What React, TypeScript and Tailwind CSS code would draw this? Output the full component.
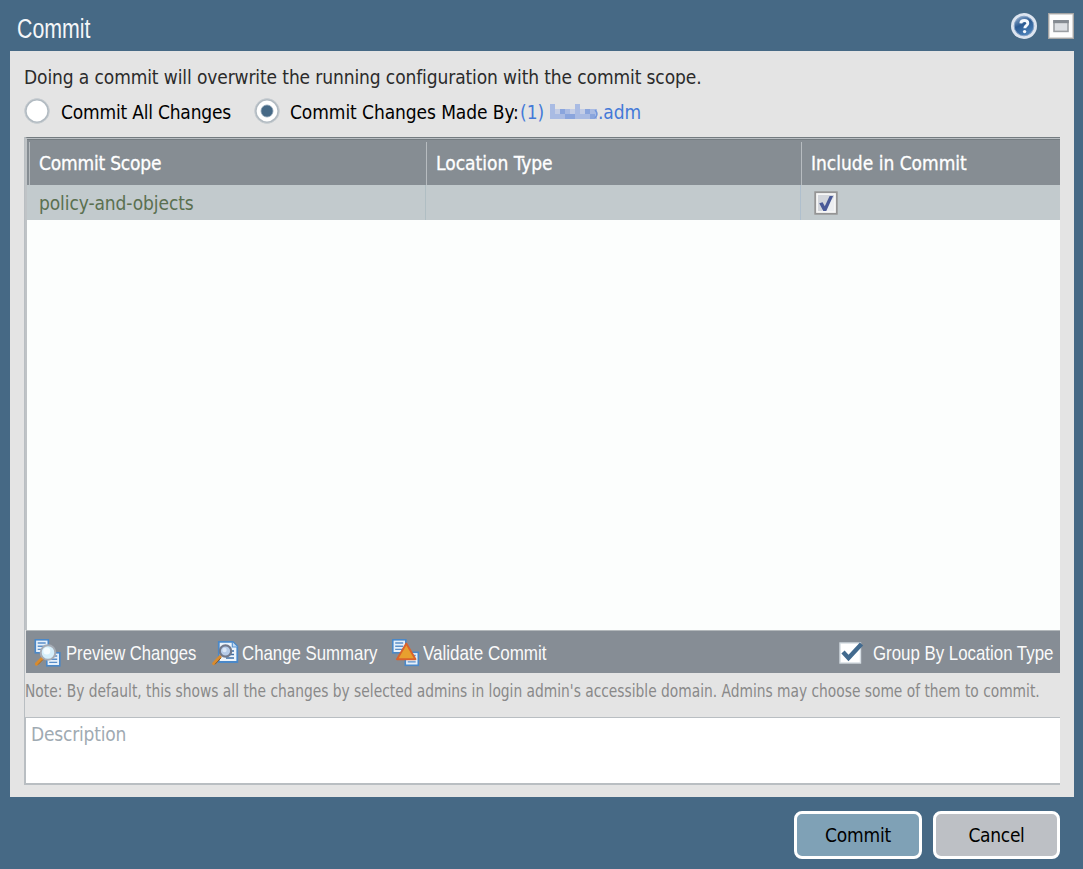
import React from "react";

const sans = "font-['DejaVu_Sans_Condensed','DejaVu_Sans',sans-serif] [font-stretch:condensed]";
const narrow = "font-['Liberation_Sans',sans-serif]";

function HelpIcon() {
  return (
    <svg width="26" height="26" viewBox="0 0 26 26">
      <defs>
        <linearGradient id="help" x1="0" y1="0" x2="0.5" y2="1">
          <stop offset="0" stopColor="#9db6d3" />
          <stop offset="0.5" stopColor="#2b5a92" />
          <stop offset="1" stopColor="#4a80b8" />
        </linearGradient>
      </defs>
      <circle cx="13" cy="13" r="13" fill="#dde5f0" />
      <circle cx="13" cy="13" r="9.8" fill="url(#help)" stroke="#86a3c6" strokeWidth="1" />
      <path d="M9.800 10.400c.2-2.200 1.700-2.900 3.500-2.900 2.100 0 3.500 1.100 3.500 2.700 0 2.500-3 2.500-3 5.100" fill="none" stroke="#f4f8fd" strokeWidth="2.900" />
      <circle cx="13.600" cy="18.600" r="1.700" fill="#f4f8fd" />
    </svg>
  );
}

function WindowIcon() {
  return (
    <svg width="26" height="26" viewBox="0 0 26 26">
      <rect x="0.5" y="0.5" width="25" height="25" fill="#fdfdfd" stroke="#a3a3a3" />
      <rect x="1.3" y="1.3" width="23.4" height="23.4" fill="none" stroke="#c5c5c3" strokeWidth="0.7" />
      <rect x="6" y="8" width="14" height="10.4" fill="#dcdfe3" stroke="#9b9fa3" strokeWidth="1.6" />
      <rect x="5.2" y="7" width="15.6" height="3.2" fill="#858b92" />
    </svg>
  );
}

function Radio({ checked = false }: { checked?: boolean }) {
  return (
    <svg width="26" height="26" viewBox="0 0 26 26">
      <circle cx="13" cy="13" r="11.4" fill="#fff" stroke="#b1bac1" strokeWidth="2" />
      <circle cx="13" cy="13" r="12.3" fill="none" stroke="#c9ced2" strokeWidth="0.8" />
      {checked && <circle cx="13" cy="13" r="6" fill="#466986" stroke="#8ba1b4" strokeWidth="0.8" />}
    </svg>
  );
}

function Sheet({ x, y }: { x: number; y: number }) {
  return (
    <g transform={`translate(${x} ${y})`}>
      <rect x="0.8" y="0.8" width="13" height="13" fill="#e6f0fa" stroke="#4a88c8" strokeWidth="1.6" />
      <path d="M3.2 4h8M3.2 7.2h8M3.2 10.4h8" stroke="#5b8fc9" strokeWidth="1.4" />
    </g>
  );
}

function PreviewIcon() {
  return (
    <svg className="shrink-0" width="28" height="28" viewBox="0 0 28 28">
      <Sheet x={0.5} y={0} />
      <Sheet x={12} y={13} />
      <path d="M8 19.500L2.500 25" stroke="#d98b2e" strokeWidth="3.200" strokeLinecap="round" />
      <path d="M8.500 21L4 25.600" stroke="#9b6c35" strokeWidth="1" />
      <circle cx="14" cy="13.500" r="7.300" fill="#d5effb" stroke="#a6acb5" strokeWidth="2" />
      <circle cx="12.800" cy="12" r="3.500" fill="#f4fcff" />
    </svg>
  );
}

function SummaryIcon() {
  return (
    <svg className="shrink-0" width="28" height="28" viewBox="0 0 28 28">
      <path d="M6.800 2.800h14l4.500 4.500v15.700h-18.500z" fill="#eef5fc" stroke="#4a88c8" strokeWidth="1.800" />
      <path d="M20.300 3v5h5" fill="#c3daf2" stroke="#5b94cf" strokeWidth="1.200" />
      <path d="M17 12h5M17 15.500h5M14 19h8" stroke="#3d6fa8" strokeWidth="1.500" />
      <path d="M8 17.800L1.800 24.500" stroke="#d98b2e" strokeWidth="3.200" strokeLinecap="round" />
      <path d="M9 18.800L3 25.300" stroke="#855a2c" strokeWidth="1" />
      <circle cx="13.500" cy="12" r="5.700" fill="#b6cbe8" stroke="#71798c" strokeWidth="2.200" />
      <circle cx="12.500" cy="11" r="2.200" fill="#dce8f8" />
    </svg>
  );
}

function ValidateIcon() {
  return (
    <svg className="shrink-0" width="28" height="28" viewBox="0 0 28 28">
      <Sheet x={0} y={0} />
      <Sheet x={12.5} y={12.5} />
      <path d="M14.300 4.500L23.500 20.200H5z" fill="#e8a02e" stroke="#d9622c" strokeWidth="1.900" strokeLinejoin="round" />
    </svg>
  );
}

function RowCheck() {
  return (
    <svg width="24" height="24" viewBox="0 0 24 24">
      <rect x="1.200" y="1.200" width="21.600" height="21.600" fill="#f6f6f6" stroke="#959595" strokeWidth="1.800" />
      <rect x="4" y="4" width="16" height="16" fill="#d3d6dc" />
      <path d="M8 20h12V6z" fill="#eceef1" />
      <path d="M5.200 12.300l3.400-1 2.200 4L15.600 5h3.500L12.300 20H9.300z" fill="#4a5a98" />
    </svg>
  );
}

function GroupCheck() {
  return (
    <svg width="26" height="24" viewBox="0 0 26 24">
      <rect x="2" y="2" width="20.500" height="20" fill="#fff" stroke="#d4dce2" strokeWidth="1.400" />
      <path d="M5 11l5.500 6L23.500 3" fill="none" stroke="#426a8e" strokeWidth="4.400" />
    </svg>
  );
}

export default function App() {
  return (
    <div className={`${sans} flex h-[869px] w-[1083px] flex-col overflow-hidden whitespace-nowrap bg-[#466985] text-[19px] text-black [font-variant-ligatures:none]`}>
      <header className="flex h-[51px] shrink-0 items-center pl-[17px] pr-[9px]">
        <h1 className={`${narrow} origin-left scale-x-[0.79] pt-[7px] text-[27px] leading-[30px] text-[#f4f6f8]`}>Commit</h1>
        <div className="ml-auto flex gap-[11px]">
          <HelpIcon />
          <WindowIcon />
        </div>
      </header>

      <main className="ml-[10px] mr-[9px] flex h-[746px] shrink-0 flex-col bg-[#e4e4e4] pl-[14px] pr-[14px]">
        <p className="mt-[14px] h-6 leading-6 tracking-[-0.11px] text-[#2b2b2b]">
          Doing a commit will overwrite the running configuration with the commit scope.
        </p>
        <div className="flex h-[48px] items-center pb-[4px]">
          <Radio />
          <span className="ml-[11px] w-[193px] pt-[2px] tracking-[-0.2px]">Commit All Changes</span>
          <Radio checked />
          <span className="ml-[10px] w-[230px] pt-[2px] tracking-[-0.08px]">Commit Changes Made By:</span>
          <span className="flex items-center pt-[2px] text-[#4379d8]">
            <span className="w-[25px]">(1)</span>
            <svg className="ml-[5px]" width="48" height="16" viewBox="0 0 48 16">
              <path d="M0 0h5v15H0zM25 0h5v15h-5z" fill="#a9bbe3" />
              <path d="M5 5h20v10H5zM30 5h17v10H30z" fill="#a9bbe3" />
              <path d="M5 5h5v5H5zM20 5h5v5h-5zM30 5h5v5h-5z" fill="#c3cde6" />
              <path d="M10 5h5v5h-5zM15 10h10v5H15zM35 5h5v5h-5zM40 10h5v5h-5z" fill="#8aa5dd" />
              <path d="M45 6q4 4 0 8" fill="none" stroke="#7397dc" strokeWidth="1.500" />
            </svg>
            <span className="tracking-[-0.1px]">.adm</span>
          </span>
        </div>

        <section className="flex h-[536px] shrink-0 flex-col border-l border-[#b9bec2]">
          <div className="flex h-[493px] flex-col border-l-2 border-t border-l-[#bfc3c6] border-t-[#737b80] bg-[#fcfefd]">
            <div className="h-px shrink-0 bg-[#b9bec2]" />
            <div className="flex h-[46px] shrink-0 border-t border-[#737b80] bg-[#868d93] text-white [-webkit-text-stroke:0.3px_white]">
              <div className="ml-[2px] mt-[2px] w-[397px] border-l border-[#b7bcc0] pl-[9px] leading-[43px] tracking-[-0.2px]">Commit Scope</div>
              <div className="mt-[2px] w-[375px] border-l border-[#b7bcc0] pl-[9px] leading-[43px]">Location Type</div>
              <div className="mt-[2px] flex-1 border-l border-[#b7bcc0] pl-[9px] leading-[43px]">Include in Commit</div>
            </div>
            <div className="flex h-[35px] shrink-0 items-center bg-[#c2cacd]">
              <div className="w-[398px] pl-[12px] pt-[2px] tracking-[-0.1px] text-[#5a7050]">policy-and-objects</div>
              <div className="h-full w-[375px] border-l border-[#b0bec3]" />
              <div className="flex h-full flex-1 items-center border-l border-[#afbfcd] pl-[13px] pt-[1px]">
                <RowCheck />
              </div>
            </div>
          </div>
          <div className={`${narrow} ml-px flex h-[43px] shrink-0 items-center border-t border-[#b3b8bb] bg-[#868d95] pl-[8px] pr-[7px] pt-[2px] text-[21px] text-[#fafafa]`}>
            <PreviewIcon />
            <span className="ml-[4px] w-[146px]"><span className="inline-block origin-left scale-x-[0.792]">Preview Changes</span></span>
            <SummaryIcon />
            <span className="ml-[2px] w-[150px]"><span className="inline-block origin-left scale-x-[0.8]">Change Summary</span></span>
            <ValidateIcon />
            <span className="ml-[3px] w-[130px]"><span className="inline-block origin-left scale-x-[0.81]">Validate Commit</span></span>
            <span className="ml-auto mr-[9px]"><GroupCheck /></span>
            <span className="w-[180px]"><span className="inline-block origin-left scale-x-[0.802]">Group By Location Type</span></span>
          </div>
        </section>
        <div className="h-[44px] shrink-0 border-l border-[#b9bec2] pt-[6px] text-[17px] leading-6 text-[#898989]">
          <span className="inline-block origin-left scale-x-[0.9025]">
            Note: By default, this shows all the changes by selected admins in login admin's accessible domain. Admins may choose some of them to commit.
          </span>
        </div>
        <div className="h-[68px] shrink-0 border-b-2 border-l-2 border-t border-[#b9bec2] bg-white pl-[5px] pt-[4px] leading-6 tracking-[-0.2px] text-[#9faab2]">
          Description
        </div>
      </main>

      <footer className="flex flex-1 justify-end gap-[11px] pr-[23px] pt-[14px]">
        <button className="h-[48px] w-[128px] rounded-[8px] border-[3px] border-white bg-[#7fa1b6] tracking-[-0.15px]">Commit</button>
        <button className="h-[48px] w-[127px] rounded-[8px] border-[3px] border-white bg-[#bdc0c5] tracking-[-0.3px]">Cancel</button>
      </footer>
    </div>
  );
}
